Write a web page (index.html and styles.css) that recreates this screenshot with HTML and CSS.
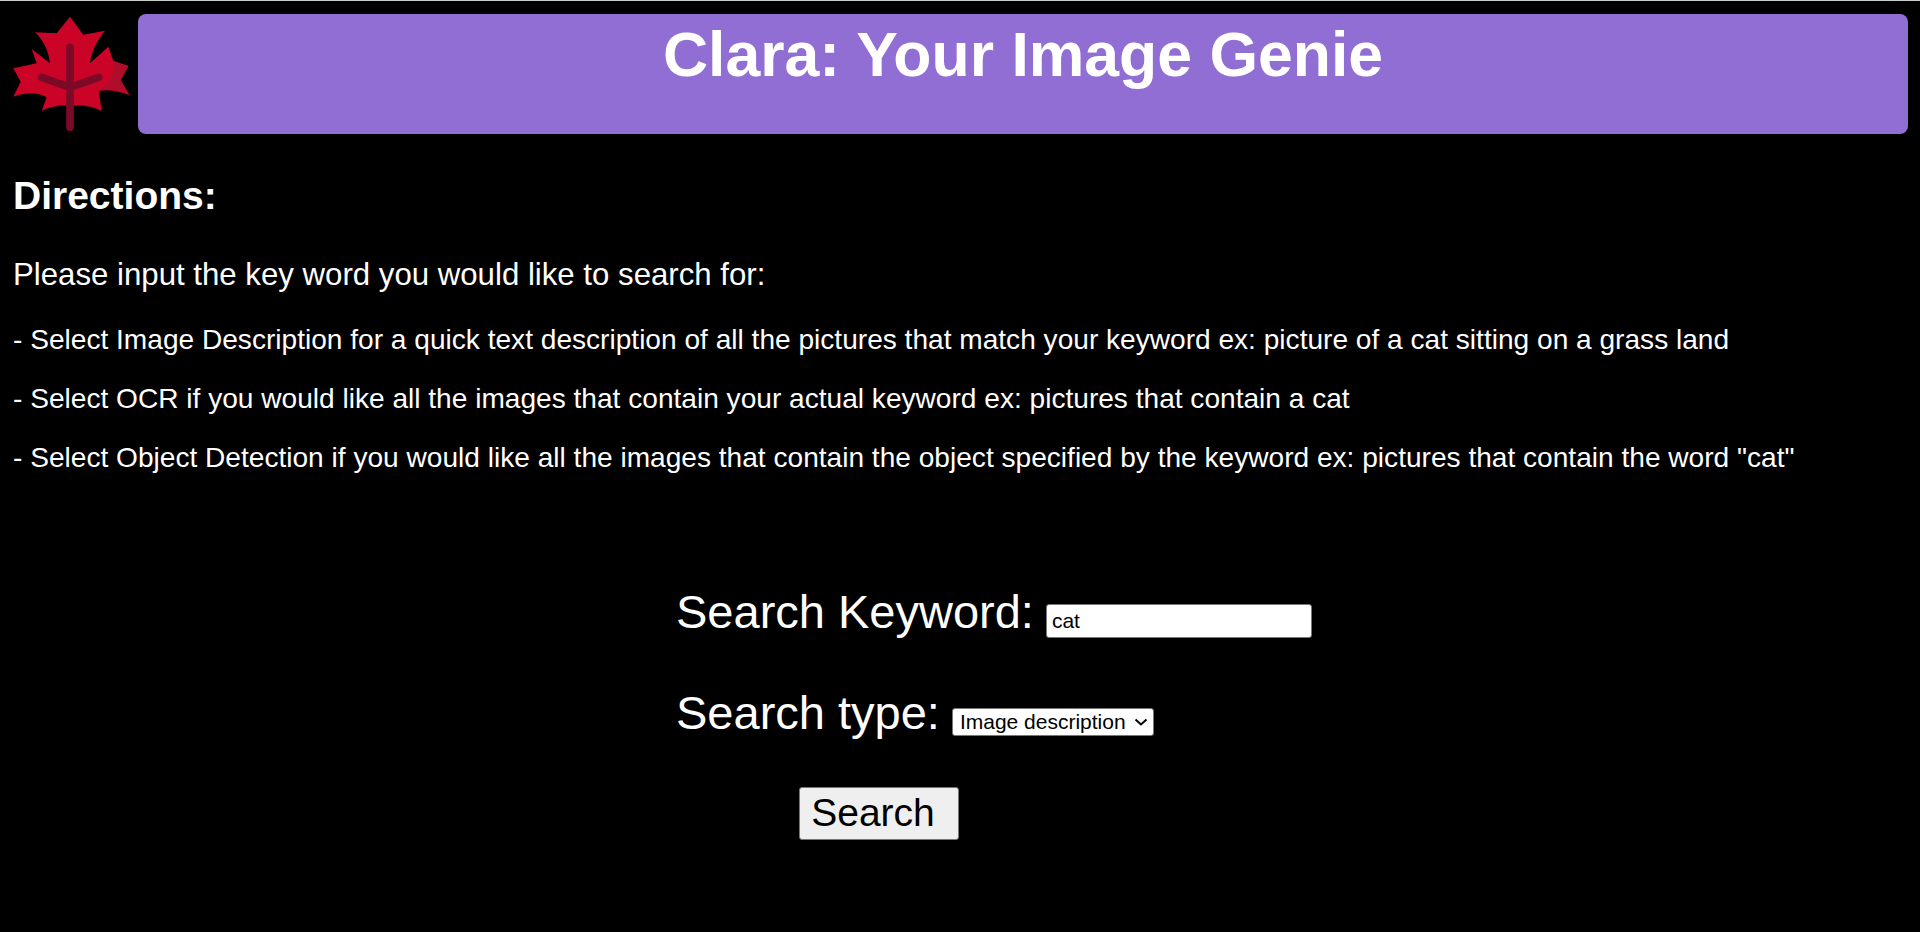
FILE: index.html
```html
<!DOCTYPE html>
<html lang="en">
<head>
    <meta charset="UTF-8">
    <title>Clara: Your Image Genie</title>
    <link rel="stylesheet" href="styles.css">
</head>
<body>
    <div class="header">
        <svg class="logo" viewBox="39 48 351 345" width="117" height="115">
            <path fill="#ca0327" d="M210 50 L250 104 L315 92 C292 120 275 150 270 190 L325 140 L340 183 L385 198 L362 240 L388 285 C355 272 325 268 296 272 L305 333 C275 318 245 314 215 318 L205 318 C180 314 150 320 125 333 L140 292 C110 275 75 278 40 290 L62 245 L40 205 L110 190 L95 147 L150 190 C145 150 130 120 105 97 L170 100 Z"/>
            <path fill="#b00d2b" d="M340 183 L385 198 L362 240 L388 285 C355 268 315 262 265 280 C300 270 350 250 340 183 Z"/>
            <path fill="none" stroke="#7c0a26" stroke-width="23" stroke-linecap="round" stroke-linejoin="round" d="M210 142 V382 M125 232 L210 262 L296 232"/>
        </svg>
        <div class="banner">
            <h1>Clara: Your Image Genie</h1>
        </div>
    </div>

    <div class="directions">
        <h2>Directions:</h2>
        <p class="lead">Please input the key word you would like to search for:</p>
        <p>- Select Image Description for a quick text description of all the pictures that match your keyword ex: picture of a cat sitting on a grass land</p>
        <p>- Select OCR if you would like all the images that contain your actual keyword ex: pictures that contain a cat</p>
        <p>- Select Object Detection if you would like all the images that contain the object specified by the keyword ex: pictures that contain the word "cat"</p>
    </div>

    <form class="search-form">
        <div class="form-row">
            <label for="keyword">Search Keyword:</label>
            <input id="keyword" type="text" value="cat">
        </div>
        <div class="form-row">
            <label for="type">Search type:</label>
            <select id="type">
                <option>Image description</option>
                <option>OCR</option>
                <option>Object detection</option>
            </select>
        </div>
        <button type="button" class="search-btn">Search</button>
    </form>
</body>
</html>
```

FILE: styles.css
```css
html, body {
    margin: 0;
    padding: 0;
    height: 100%;
    overflow: hidden;
    background-color: #000;
}
body {
    box-sizing: border-box;
    border-top: 1px solid #ccc;
    color: #fff;
    font-family: "Liberation Sans", Arial, sans-serif;
}
.header {
    display: flex;
    gap: 8px;
    padding: 13px 12px 0 13px;
    align-items: flex-start;
}
.logo {
    flex: none;
    margin-top: 2px;
}
.banner {
    flex: 1;
    height: 120px;
    background-color: #906ed3;
    border-radius: 8px;
    text-align: center;
}
.banner h1 {
    margin: 0;
    padding-top: 3px;
    font-size: 62.5px;
    line-height: 74px;
}
.directions {
    padding: 41px 13px 0;
}
.directions h2 {
    margin: 0 0 43px;
    font-size: 39px;
    line-height: 41px;
}
.directions p {
    margin: 0 0 31px;
    font-size: 28.1px;
    line-height: 28px;
}
.directions .lead {
    margin-bottom: 35px;
    font-size: 31.2px;
    line-height: 32px;
}
.search-form {
    margin: 112px 0 0 676px;
}
.form-row {
    display: flex;
    align-items: baseline;
    gap: 12px;
    margin-bottom: 46px;
}
.form-row + .form-row {
    margin-bottom: 47px;
}
.form-row label {
    font-size: 47px;
    line-height: 55px;
}
.form-row input {
    box-sizing: border-box;
    width: 266px;
    height: 34px;
    padding: 0 5px;
    border: 1px solid #767676;
    border-radius: 3px;
    background: #fff;
    font-family: inherit;
    font-size: 21px;
}
.form-row select {
    box-sizing: border-box;
    width: 202px;
    height: 28px;
    padding: 0 0 0 7px;
    border: 1px solid #767676;
    border-radius: 3px;
    appearance: none;
    background: #fff url("data:image/svg+xml,%3Csvg xmlns='http://www.w3.org/2000/svg' width='14' height='8'%3E%3Cpath d='M1.5 1.5 L7 6.5 L12.5 1.5' fill='none' stroke='%23000' stroke-width='2'/%3E%3C/svg%3E") no-repeat right 5px center;
    color: #000;
    font-family: inherit;
    font-size: 21px;
}
.search-btn {
    display: block;
    box-sizing: border-box;
    width: 160px;
    height: 53px;
    margin-left: 123px;
    padding: 0 12px 2px 0;
    border: 1px solid #767676;
    border-radius: 3px;
    background-color: #efefef;
    font-family: inherit;
    font-size: 39px;
    color: #000;
}
```
